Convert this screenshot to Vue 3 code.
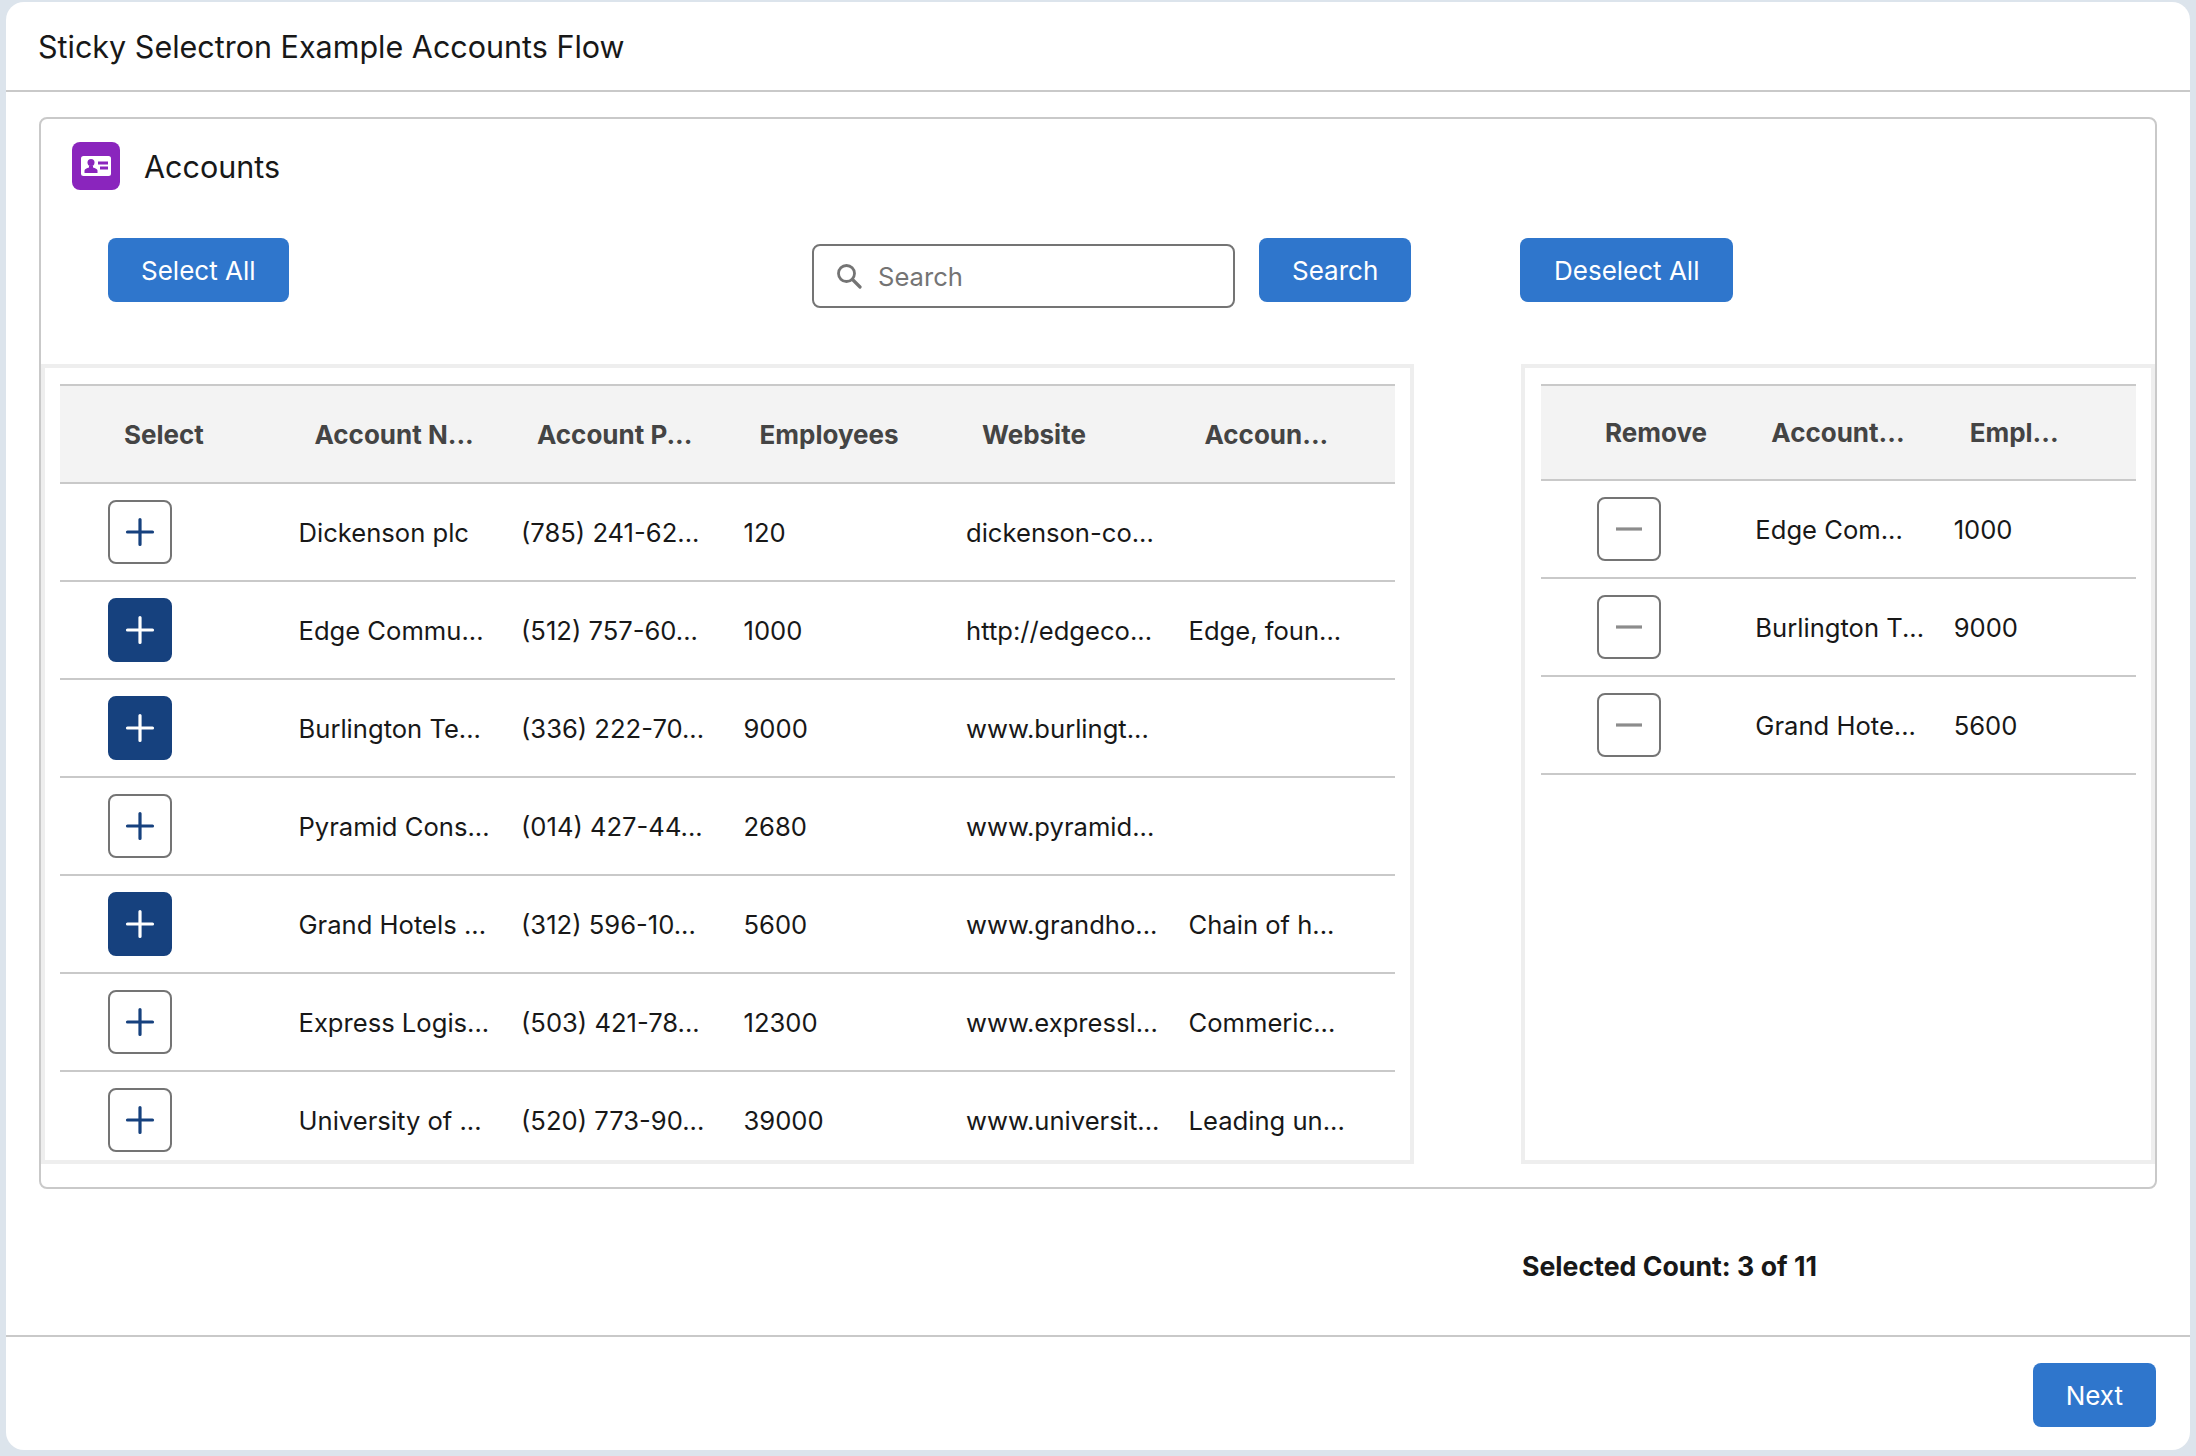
<template>
  <div class="page">
    <div class="flow-card">
      <header class="flow-header">Sticky Selectron Example Accounts Flow</header>

      <main class="flow-body">
        <section class="panel">
          <div class="panel-title">
            <span class="object-icon">
              <svg viewBox="0 0 30 20" width="30" height="20">
                <rect x="0" y="0" width="30" height="20" rx="2.500" fill="#fff" />
                <circle cx="10" cy="6.500" r="3.500" fill="#8a25bd" />
                <path d="M3.500 17v-2.500c0-1.500 2.500-2.500 4.500-3v-2h4v2c2 .5 4.500 1.500 4.500 3V17z" fill="#8a25bd" />
                <rect x="17" y="5.500" width="10" height="3" fill="#8a25bd" />
                <rect x="19" y="10.500" width="8" height="3" fill="#8a25bd" />
              </svg>
            </span>
            <span>Accounts</span>
          </div>

          <div class="toolbar">
            <div class="toolbar-left">
              <button class="btn">Select All</button>
            </div>
            <div class="search-group">
              <label class="search-input">
                <svg viewBox="0 0 26 26" width="26" height="26">
                  <circle cx="10.500" cy="10.500" r="8" fill="none" stroke="#747474" stroke-width="2.800" />
                  <path d="M16.500 16.500l7.500 7.500" stroke="#747474" stroke-width="3.200" stroke-linecap="round" />
                </svg>
                <span>Search</span>
              </label>
              <button class="btn">Search</button>
            </div>
            <div class="toolbar-right">
              <button class="btn">Deselect All</button>
            </div>
          </div>

          <div class="tables">
            <div class="table-box left-box">
              <div class="grid-table left-table">
                <div class="row head">
                  <div v-for="h in leftHeads" :key="h" class="cell">{{ h }}</div>
                </div>
                <div v-for="row in accounts" :key="row.phone" class="row">
                  <div class="cell">
                    <button class="square-btn" :class="{ selected: row.selected }">
                      <svg viewBox="0 0 30 30" width="30" height="30">
                        <path d="M15 2.500v25M2.500 15h25" stroke="currentColor" stroke-width="3.200" stroke-linecap="round" />
                      </svg>
                    </button>
                  </div>
                  <div class="cell">{{ row.name }}</div>
                  <div class="cell">{{ row.phone }}</div>
                  <div class="cell">{{ row.employees }}</div>
                  <div class="cell">{{ row.website }}</div>
                  <div class="cell">{{ row.description }}</div>
                </div>
              </div>
            </div>

            <div class="table-box right-box">
              <div class="grid-table right-table">
                <div class="row head">
                  <div v-for="h in rightHeads" :key="h" class="cell">{{ h }}</div>
                </div>
                <div v-for="row in picked" :key="row.name" class="row">
                  <div class="cell">
                    <button class="square-btn minus">
                      <svg viewBox="0 0 30 30" width="30" height="30">
                        <path d="M2 15h26" stroke="currentColor" stroke-width="3.200" />
                      </svg>
                    </button>
                  </div>
                  <div class="cell">{{ row.name }}</div>
                  <div class="cell">{{ row.employees }}</div>
                </div>
              </div>
            </div>
          </div>
        </section>

        <div class="count">Selected Count: 3 of 11</div>
      </main>

      <footer class="flow-footer">
        <button class="btn">Next</button>
      </footer>
    </div>
  </div>
</template>

<script setup>
const leftHeads = ['Select', 'Account N...', 'Account P...', 'Employees', 'Website', 'Accoun...']
const rightHeads = ['Remove', 'Account...', 'Empl...']

const accounts = [
  { name: 'Dickenson plc', phone: '(785) 241-62...', employees: '120', website: 'dickenson-co...', description: '', selected: false },
  { name: 'Edge Commu...', phone: '(512) 757-60...', employees: '1000', website: 'http://edgeco...', description: 'Edge, foun...', selected: true },
  { name: 'Burlington Te...', phone: '(336) 222-70...', employees: '9000', website: 'www.burlingt...', description: '', selected: true },
  { name: 'Pyramid Cons...', phone: '(014) 427-44...', employees: '2680', website: 'www.pyramid...', description: '', selected: false },
  { name: 'Grand Hotels ...', phone: '(312) 596-10...', employees: '5600', website: 'www.grandho...', description: 'Chain of h...', selected: true },
  { name: 'Express Logis...', phone: '(503) 421-78...', employees: '12300', website: 'www.expressl...', description: 'Commeric...', selected: false },
  { name: 'University of ...', phone: '(520) 773-90...', employees: '39000', website: 'www.universit...', description: 'Leading un...', selected: false }
]

const picked = [
  { name: 'Edge Com...', employees: '1000' },
  { name: 'Burlington T...', employees: '9000' },
  { name: 'Grand Hote...', employees: '5600' }
]
</script>

<style>
body {
  margin: 0;
  background: #dce4ec;
}
</style>

<style scoped>
.page {
  box-sizing: border-box;
  height: 1456px;
  padding: 2px 6px 6px 6px;
  font-family: Inter, "Noto Sans", sans-serif;
  color: #181818;
}

.flow-card {
  height: 100%;
  display: flex;
  flex-direction: column;
  background: #fff;
  border-radius: 18px;
}

.flow-header {
  height: 90px;
  flex-shrink: 0;
  box-sizing: border-box;
  padding: 0 32px;
  display: flex;
  align-items: center;
  border-bottom: 2px solid #c9c9c9;
  font-size: 30.500px;
}

.flow-body {
  flex: 1;
  padding: 25px 33px 0 33px;
}

.panel {
  box-sizing: border-box;
  height: 1072px;
  border: 2px solid #c9c9c9;
  border-radius: 8px;
}

.panel-title {
  display: flex;
  align-items: center;
  gap: 24px;
  padding: 23px 0 0 31px;
  font-size: 30.500px;
}

.object-icon {
  width: 48px;
  height: 48px;
  border-radius: 8px;
  background: #8a25bd;
  display: flex;
  align-items: center;
  justify-content: center;
}

.toolbar {
  display: flex;
  align-items: flex-start;
  padding-top: 48px;
  height: 174px;
  box-sizing: border-box;
}

.toolbar-left {
  width: 771px;
  padding-left: 67px;
  box-sizing: border-box;
}

.search-group {
  width: 708px;
  display: flex;
  gap: 24px;
}

.search-input {
  box-sizing: border-box;
  width: 423px;
  height: 64px;
  margin-top: 6px;
  padding-left: 22px;
  display: flex;
  align-items: center;
  gap: 16px;
  border: 2px solid #747474;
  border-radius: 8px;
  font-size: 25.600px;
  color: #747474;
}

.btn {
  height: 64px;
  padding: 0 33px;
  border: 0;
  border-radius: 8px;
  background: #2f76cc;
  color: #fff;
  font: 26px Inter, "Noto Sans", sans-serif;
}

.toolbar-right .btn {
  padding: 0 34px;
}

.tables {
  display: flex;
  align-items: stretch;
  justify-content: space-between;
  height: 800px;
}

.table-box {
  box-sizing: border-box;
  height: 800px;
  border: 4px solid #eee;
  overflow: hidden;
}

.left-box {
  width: 1373px;
  padding: 16px 15px 0 15px;
}

.right-box {
  width: 634px;
  padding: 16px 15px 0 16px;
}

.row {
  display: grid;
  height: 98px;
  box-sizing: border-box;
  border-bottom: 2px solid #c9c9c9;
  align-items: center;
  font-size: 25.600px;
}

.left-table .row {
  grid-template-columns: repeat(6, 1fr);
}

.right-table .row {
  grid-template-columns: repeat(3, 1fr);
}

.row.head {
  height: 100px;
  border-top: 2px solid #c9c9c9;
  background: #f3f3f3;
  font-size: 26px;
  font-weight: 700;
  color: #444;
}

.right-table .row.head {
  height: 97px;
}

.cell {
  padding-left: 16px;
  white-space: nowrap;
}

.head .cell {
  padding-left: 32px;
}

.left-table .cell:first-child {
  padding-left: 48px;
}

.left-table .head .cell:first-child {
  padding-left: 64px;
}

.right-table .cell:first-child {
  padding-left: 56px;
}

.right-table .head .cell:first-child {
  padding-left: 64px;
}

.square-btn {
  width: 64px;
  height: 64px;
  padding: 0;
  display: flex;
  align-items: center;
  justify-content: center;
  background: #fff;
  border: 2px solid #747474;
  border-radius: 8px;
  color: #16417e;
}

.square-btn.selected {
  background: #16417e;
  border-color: #16417e;
  color: #fff;
}

.square-btn.minus {
  color: #8c8c8c;
}

.count {
  margin: 59px 0 0 1483px;
  font-size: 26.700px;
  font-weight: 700;
  line-height: 36px;
}

.flow-footer {
  height: 115px;
  flex-shrink: 0;
  box-sizing: border-box;
  border-top: 2px solid #c9c9c9;
  padding: 26px 34px 0 0;
  display: flex;
  justify-content: flex-end;
  align-items: flex-start;
}
</style>
